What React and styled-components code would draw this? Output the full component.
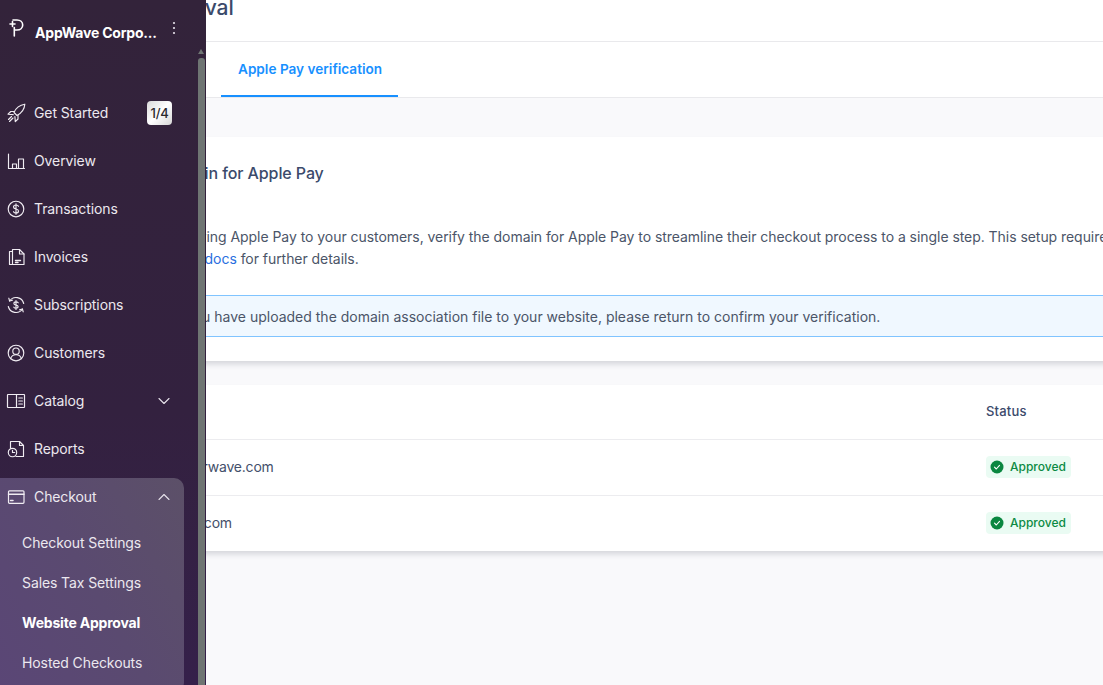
import React from "react";
import styled, { createGlobalStyle } from "styled-components";

const GlobalStyle = createGlobalStyle`
  html, body {
    margin: 0;
    padding: 0;
    width: 1103px;
    height: 685px;
    overflow: hidden;
    background: #f9f9fb;
    font-family: Inter, "Liberation Sans", sans-serif;
  }
`;

const Page = styled.div`
  position: relative;
  width: 1103px;
  height: 685px;
  overflow: hidden;
`;

/* sidebar sits on top of the page content */
const Sidebar = styled.aside`
  position: absolute;
  top: 0;
  left: 0;
  bottom: 0;
  width: 206px;
  overflow: hidden;
  background: linear-gradient(180deg, #33233a 0%, #33213f 60%, #35204a 100%);
  color: #e9e5ec;
  z-index: 2;
`;

const Brand = styled.div`
  display: flex;
  align-items: flex-start;
  height: 89px;
  padding: 17px 0 0 7px;
  box-sizing: border-box;
`;

const BrandName = styled.div`
  margin: 7px 0 0 8px;
  width: 124px;
  font-size: 14px;
  line-height: 18px;
  font-weight: 700;
  letter-spacing: -0.2px;
  color: #ffffff;
  white-space: nowrap;
`;

const Dots = styled.svg`
  margin-left: 10px;
  width: 10px;
  height: 22px;
`;

const Nav = styled.nav`
  display: flex;
  flex-direction: column;
  width: 198px;
`;

const NavRow = styled.div`
  display: flex;
  align-items: center;
  height: ${(p) => (p.$compact ? "38px" : "48px")};
  padding-left: 6px;
  font-size: 14px;
  font-weight: 400;
  letter-spacing: -0.1px;
  color: #ece8ef;
`;

const NavLabel = styled.span`
  margin: 0 0 2px 8px;
  flex: 1;
`;

const Icon = styled.svg`
  width: 20px;
  height: 20px;
  flex: none;
  fill: none;
  stroke: #f0ecf2;
  stroke-width: 1.15;
  stroke-linecap: round;
  stroke-linejoin: round;
`;

const Chevron = styled.svg`
  width: 14px;
  height: 14px;
  margin-right: ${(p) => (p.$inGroup ? "13px" : "27px")};
  fill: none;
  stroke: #e6e1ea;
  stroke-width: 1.1;
  stroke-linecap: round;
  stroke-linejoin: round;
`;

const Progress = styled.span`
  display: flex;
  align-items: center;
  justify-content: center;
  width: 25px;
  height: 24px;
  margin-right: 26px;
  border-radius: 4px;
  background: linear-gradient(135deg, #d9d9d9 0%, #ffffff 50%, #d6d6d6 100%);
  color: #2a2a2e;
  font-size: 13px;
  font-weight: 500;
  letter-spacing: -0.3px;
`;

const CheckoutGroup = styled.div`
  width: 184px;
  height: 214px;
  margin-top: 5px;
  border-radius: 0 10px 10px 0;
  background: linear-gradient(60deg, #5a4676 0%, #5a4a70 50%, #5c5068 100%);
`;

const SubList = styled.div`
  display: flex;
  flex-direction: column;
  padding-top: 6px;
`;

const SubItem = styled.div`
  display: flex;
  align-items: center;
  height: 40px;
  padding-left: 22px;
  font-size: 14px;
  font-weight: ${(p) => (p.$active ? 700 : 400)};
  letter-spacing: ${(p) => (p.$active ? "-0.2px" : "-0.1px")};
  color: ${(p) => (p.$active ? "#ffffff" : "#ece8ef")};
`;

const ScrollArrow = styled.div`
  position: absolute;
  top: 49px;
  left: 198px;
  width: 0;
  height: 0;
  border-left: 3.5px solid transparent;
  border-right: 3.5px solid transparent;
  border-bottom: 5px solid #6f7573;
`;

const ScrollThumb = styled.div`
  position: absolute;
  top: 58px;
  left: 198px;
  bottom: 0;
  width: 7px;
  border-radius: 3px 3px 0 0;
  background: #6f7573;
`;

const Main = styled.main`
  width: 1400px;
`;

const TitleBar = styled.header`
  height: 41px;
  overflow: hidden;
  background: #ffffff;
  border-bottom: 1px solid #e9e9ec;
`;

const Title = styled.h1`
  margin: -5px 0 0 57px;
  font-size: 21px;
  line-height: 26px;
  font-weight: 500;
  color: #3b4a6b;
`;

const Tabs = styled.div`
  display: flex;
  height: 55px;
  padding-left: 221px;
  background: #ffffff;
  border-bottom: 1px solid #e9e9ec;
`;

const Tab = styled.div`
  display: flex;
  align-items: center;
  height: 55px;
  padding: 0 16px 0 17px;
  box-sizing: border-box;
  border-bottom: 2px solid #1890ff;
  color: #1890ff;
  font-size: 13.6px;
  font-weight: 600;
`;

const Card = styled.section`
  background: #ffffff;
  box-shadow: 0 4px 6px -1px rgba(60, 66, 87, 0.2);
`;

const VerifyCard = styled(Card)`
  height: 224px;
  margin-top: 39px;
  box-sizing: border-box;
  overflow: hidden;
`;

const CardTitle = styled.h2`
  margin: 25px 0 0 113px;
  font-size: 16px;
  line-height: 22px;
  font-weight: 500;
  letter-spacing: -0.1px;
  color: #3b4a6b;
`;

const Intro = styled.p`
  margin: 42px 0 0 128px;
  font-size: 14px;
  line-height: 22px;
  letter-spacing: -0.05px;
  color: #4b5568;
  white-space: nowrap;
`;

const DocsLink = styled.a`
  color: #2a6fe0;
  text-decoration: none;
`;

const Notice = styled.div`
  display: flex;
  align-items: center;
  height: 40px;
  margin-top: 25px;
  padding-left: 147px;
  background: #f0f8ff;
  border-top: 1px solid #80c4ff;
  border-bottom: 1px solid #80c4ff;
  font-size: 14px;
  color: #4b5568;
  white-space: nowrap;
`;

const DomainCard = styled(Card)`
  margin-top: 24px;
`;

const TableRow = styled.div`
  display: grid;
  grid-template-columns: 986px 1fr;
  align-items: center;
  height: ${(p) => (p.$head ? "52px" : "53px")};
  padding-bottom: 2px;
  border-bottom: ${(p) => (p.$last ? "0" : "1px solid #ececef")};
  font-size: 14px;
  color: #44506a;
`;

const DomainCell = styled.div`
  padding-left: ${(p) => (p.$head ? "150px" : "170px")};
  letter-spacing: -0.2px;
`;

const HeadCell = styled.div`
  font-size: 13px;
  font-weight: 500;
  letter-spacing: 0.2px;
  color: #3b4a6b;
`;

const StatusBadge = styled.span`
  display: inline-flex;
  align-items: center;
  gap: 6px;
  width: 85px;
  height: 22px;
  box-sizing: border-box;
  padding-left: 4px;
  border-radius: 4px;
  background: #eafbf3;
  color: #0b8a44;
  font-size: 12px;
  font-weight: 500;
`;

const navItems = [
  {
    label: "Get Started",
    progress: "1/4",
    icon: (
      <>
        <path d="M8 9.500C9.500 6 13 2 18.800 1.200 18.500 7 14.500 10.500 11 12.500z" />
        <path d="M8.500 8.500H4.800L2 11.200l5.200.4" />
        <path d="M12 12v4l-2.700 2.700-.4-5.200" />
        <path d="M5.500 13.500 2.500 16.500M7 15l-3.500 3.500" />
      </>
    ),
  },
  {
    label: "Overview",
    icon: (
      <path d="M2.500 3v14.500h16M6.500 17.500v-4.500h4v4.500M12.500 17.500V8h5v9.500" />
    ),
  },
  {
    label: "Transactions",
    icon: (
      <>
        <circle cx="10" cy="10" r="7.800" />
        <path d="M12.500 7.300c-.4-.8-1.300-1.300-2.500-1.300-1.500 0-2.500.8-2.500 2s1 1.700 2.500 2 2.500.8 2.500 2-1 2-2.500 2c-1.200 0-2.100-.5-2.500-1.300M10 4.800v10.400" />
      </>
    ),
  },
  {
    label: "Invoices",
    icon: (
      <>
        <path d="M6.500 2.500h7l4.500 4.500v10.500h-11.500z" />
        <path d="M13.500 2.500V7H18M6.500 4.500H3.500v13h3" />
        <path d="M9.500 13.500h5M9.500 15.500h2.500" strokeWidth="1.400" />
      </>
    ),
  },
  {
    label: "Subscriptions",
    icon: (
      <>
        <path d="M3.600 6A7.800 7.800 0 0 1 17.700 8.500M16.400 14A7.800 7.800 0 0 1 2.300 11.500" />
        <path d="M2.800 3.200l.8 2.800 2.800-.8M17.200 16.800l-.8-2.800-2.800.8" />
        <path d="M12.200 7.800c-.4-.6-1.100-1-2.200-1-1.300 0-2.100.7-2.100 1.600s.8 1.400 2.100 1.600 2.100.7 2.100 1.600-.8 1.600-2.100 1.600c-1.100 0-1.800-.4-2.200-1M10 5.500v9" />
      </>
    ),
  },
  {
    label: "Customers",
    icon: (
      <>
        <circle cx="10" cy="10" r="7.800" />
        <circle cx="10" cy="8.200" r="3.200" />
        <path d="M4.600 15.600c.7-2.300 2.800-3.900 5.400-3.900s4.700 1.600 5.400 3.900" />
      </>
    ),
  },
  {
    label: "Catalog",
    chevron: "down",
    icon: (
      <>
        <rect x="1.500" y="3.500" width="17" height="13" rx="0.500" strokeWidth="1.200" />
        <path d="M10.500 3.500v13M12.800 7h3.600M12.800 10h3.600M12.800 13h3.600" strokeWidth="1.200" />
      </>
    ),
  },
  {
    label: "Reports",
    icon: (
      <>
        <path d="M4.500 9V2.500h9l4 4V17.500h-7.500" />
        <path d="M13.500 2.500v4h4" />
        <circle cx="6.500" cy="13.500" r="4.200" />
        <path d="M6.500 11.300v2.200h2.200" />
      </>
    ),
  },
];

const subItems = [
  { label: "Checkout Settings" },
  { label: "Sales Tax Settings" },
  { label: "Website Approval", active: true },
  { label: "Hosted Checkouts" },
];

const domains = ["flutterwave.com", "save.com"];

function ChevronIcon({ up }) {
  return (
    <Chevron viewBox="0 0 14 14" $inGroup={up}>
      <path d={up ? "M2 9.500 7 4.500l5 5" : "M2 4.500l5 5 5-5"} />
    </Chevron>
  );
}

export default function App() {
  return (
    <>
      <GlobalStyle />
      <Page>
        <Main>
          <TitleBar>
            <Title>Website Approval</Title>
          </TitleBar>
          <Tabs>
            <Tab>Apple Pay verification</Tab>
          </Tabs>
          <VerifyCard>
            <CardTitle>Verify domain for Apple Pay</CardTitle>
            <Intro>
              Before offering Apple Pay to your customers, verify the domain for Apple Pay to
              streamline their checkout process to a single step. This setup requires a few steps.
              <br />
              Review our <DocsLink href="#">docs</DocsLink> for further details.
            </Intro>
            <Notice>
              Once you have uploaded the domain association file to your website, please return to
              confirm your verification.
            </Notice>
          </VerifyCard>
          <DomainCard>
            <TableRow $head>
              <DomainCell $head>Domain</DomainCell>
              <HeadCell>Status</HeadCell>
            </TableRow>
            {domains.map((domain, index) => (
              <TableRow key={domain} $last={index === domains.length - 1}>
                <DomainCell>{domain}</DomainCell>
                <div>
                  <StatusBadge>
                    <svg width="14" height="14" viewBox="0 0 14 14">
                      <circle cx="7" cy="7" r="6.500" fill="#0a8740" />
                      <path
                        d="M4.500 7.200 6.300 9l3.200-3.600"
                        fill="none"
                        stroke="#ffffff"
                        strokeWidth="1.100"
                        strokeLinecap="round"
                        strokeLinejoin="round"
                      />
                    </svg>
                    Approved
                  </StatusBadge>
                </div>
              </TableRow>
            ))}
          </DomainCard>
        </Main>

        <Sidebar>
          <Brand>
            <svg width="20" height="22" viewBox="0 0 20 22" fill="none" stroke="#ffffff" strokeWidth="1.600" strokeLinecap="round">
              <path d="M6 3h4c3.200 0 5.700 2 5.700 5s-2.500 5-5.700 5H8" />
              <path d="M7.300 10.500V19" />
              <path d="M3 7h5M5.500 4.500v5" />
            </svg>
            <BrandName>AppWave Corpo...</BrandName>
            <Dots viewBox="0 0 10 22">
              <circle cx="5" cy="6" r="1.100" fill="#e6e1ea" />
              <circle cx="5" cy="11" r="1.100" fill="#e6e1ea" />
              <circle cx="5" cy="16" r="1.100" fill="#e6e1ea" />
            </Dots>
          </Brand>
          <Nav>
            {navItems.map((item) => (
              <NavRow key={item.label}>
                <Icon viewBox="0 0 20 20">{item.icon}</Icon>
                <NavLabel>{item.label}</NavLabel>
                {item.progress && <Progress>{item.progress}</Progress>}
                {item.chevron && <ChevronIcon />}
              </NavRow>
            ))}
            <CheckoutGroup>
              <NavRow $compact>
                <Icon viewBox="0 0 20 20">
                  <rect x="2.500" y="3.800" width="15.500" height="12.500" rx="1" strokeWidth="1.200" />
                  <path d="M2.500 7.200h15.500" strokeWidth="1.400" />
                  <path d="M4.500 13.500h2.500" strokeWidth="1.500" />
                </Icon>
                <NavLabel>Checkout</NavLabel>
                <ChevronIcon up />
              </NavRow>
              <SubList>
                {subItems.map((sub) => (
                  <SubItem key={sub.label} $active={sub.active}>
                    {sub.label}
                  </SubItem>
                ))}
              </SubList>
            </CheckoutGroup>
          </Nav>
          <ScrollArrow />
          <ScrollThumb />
        </Sidebar>
      </Page>
    </>
  );
}
